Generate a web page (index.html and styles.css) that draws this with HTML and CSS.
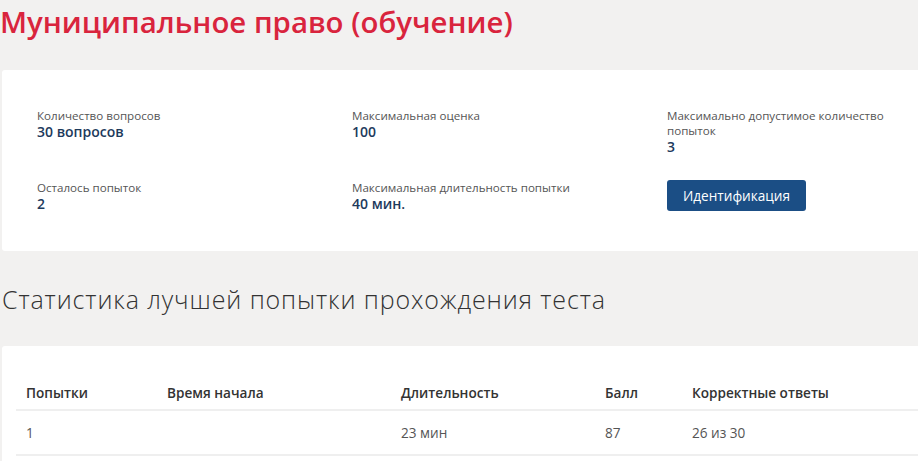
FILE: index.html
```html
<!DOCTYPE html>
<html lang="ru">
<head>
  <meta charset="UTF-8">
  <meta name="viewport" content="width=device-width, initial-scale=1.0">
  <title>Муниципальное право (обучение)</title>
  <link rel="stylesheet" href="styles.css">
</head>
<body>
  <h1 class="page-title">Муниципальное право (обучение)</h1>

  <div class="card info-card">
    <div class="info-grid">
      <div class="info-item">
        <div class="info-label">Количество вопросов</div>
        <div class="info-value">30 вопросов</div>
      </div>
      <div class="info-item">
        <div class="info-label">Максимальная оценка</div>
        <div class="info-value">100</div>
      </div>
      <div class="info-item">
        <div class="info-label">Максимально допустимое количество попыток</div>
        <div class="info-value">3</div>
      </div>
      <div class="info-item">
        <div class="info-label">Осталось попыток</div>
        <div class="info-value">2</div>
      </div>
      <div class="info-item">
        <div class="info-label">Максимальная длительность попытки</div>
        <div class="info-value">40 мин.</div>
      </div>
      <div class="info-item">
        <button class="btn-primary" type="button">Идентификация</button>
      </div>
    </div>
  </div>

  <h2 class="section-title">Статистика лучшей попытки прохождения теста</h2>

  <div class="card stats-card">
    <table class="stats-table">
      <thead>
        <tr>
          <th class="col-try">Попытки</th>
          <th class="col-start">Время начала</th>
          <th class="col-dur">Длительность</th>
          <th class="col-score">Балл</th>
          <th>Корректные ответы</th>
        </tr>
      </thead>
      <tbody>
        <tr>
          <td>1</td>
          <td></td>
          <td>23 мин</td>
          <td>87</td>
          <td>26 из 30</td>
        </tr>
      </tbody>
    </table>
  </div>
</body>
</html>
```

FILE: styles.css
```css
:root {
  --page-bg: #f2f1f0;
  --title-red: #d9243d;
  --navy: #1d3a5c;
  --btn-blue: #1b4e85;
  --label-color: #555;
  --text-color: #333;
  --line-color: #efefef;
}

body {
  margin: 0;
  background: var(--page-bg);
  font-family: 'Open Sans', 'Noto Sans', sans-serif;
  color: var(--text-color);
  overflow: hidden;
}

.page-title {
  margin: 0;
  padding: 2px 0 0 0;
  font-size: 29.4px;
  line-height: 40px;
  font-weight: 600;
  color: var(--title-red);
}

.card {
  background: #fff;
  margin-left: 2px;
  width: 960px;
  border-radius: 3px;
}

.info-card {
  margin-top: 28px;
  padding: 38px 0 0 35px;
  box-sizing: border-box;
  height: 181px;
}

.info-grid {
  display: grid;
  grid-template-columns: repeat(3, 250px);
  column-gap: 65px;
  row-gap: 24px;
}

.info-label {
  font-size: 11.6px;
  line-height: 15px;
  color: var(--label-color);
}

.info-value {
  font-size: 14px;
  line-height: 18px;
  font-weight: 600;
  color: var(--navy);
}

.btn-primary {
  width: 139px;
  height: 31px;
  border: none;
  border-radius: 3px;
  background: var(--btn-blue);
  color: #fff;
  font-family: inherit;
  font-size: 13.6px;
  cursor: pointer;
}

.section-title {
  margin: 0;
  padding: 33px 0 0 2px;
  height: 62px;
  font-size: 25px;
  line-height: 30px;
  font-weight: 300;
  letter-spacing: 0.9px;
  color: var(--text-color);
}

.stats-card {
  margin-top: 0;
  padding: 29px 0 0 14px;
  height: 120px;
}

.stats-table {
  width: 944px;
  border-collapse: collapse;
  font-size: 13.6px;
}

.stats-table th,
.stats-table td {
  text-align: left;
  padding: 0 10px;
  border-bottom: 2px solid var(--line-color);
}

.stats-table th {
  height: 34px;
  font-weight: 600;
  color: var(--text-color);
}

.stats-table td {
  height: 43px;
  color: var(--label-color);
}

.col-try { width: 121px; }
.col-start { width: 214px; }
.col-dur { width: 184px; }
.col-score { width: 67px; }
```
